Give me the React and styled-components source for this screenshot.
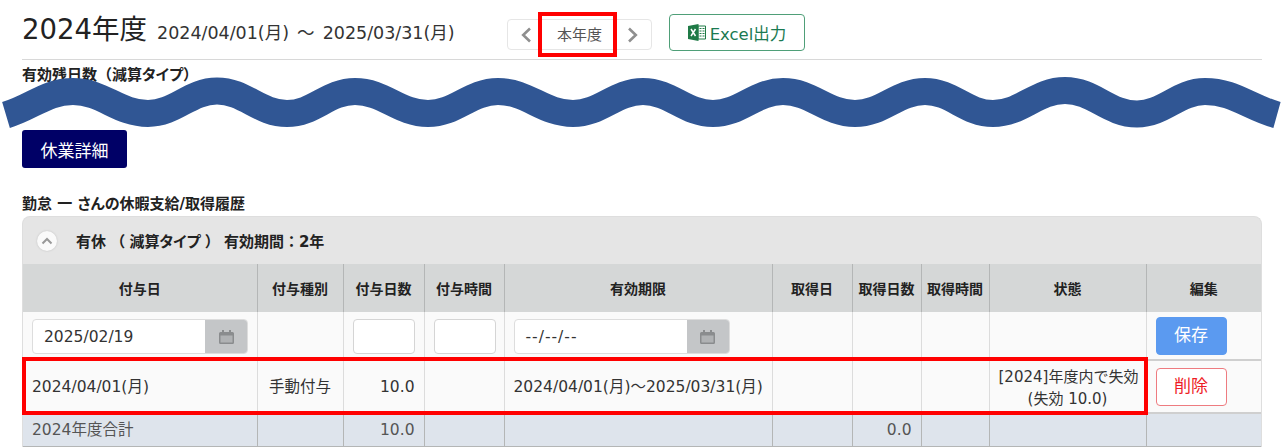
import React from 'react';
import styled, { createGlobalStyle } from 'styled-components';

const GlobalStyle = createGlobalStyle`
    html, body {
        margin: 0;
        padding: 0;
        background: #fff;
        font-family: "DejaVu Sans", "Noto Sans CJK JP", sans-serif;
        color: #333;
        overflow: hidden;
    }
`;

const Page = styled.div`
    position: relative;
    width: 1283px;
    height: 447px;
    overflow: hidden;
    box-sizing: border-box;
    padding: 0 21px 0 22px;
`;

const TitleBar = styled.div`
    display: flex;
    align-items: flex-start;
    height: 59px;
    border-bottom: 1px solid #d8d8d8;
`;

const TitleGroup = styled.div`
    display: flex;
    align-items: flex-start;
    gap: 10px;
    width: 485px;
`;

const Title = styled.h1`
    margin: 9px 0 0;
    font-size: 27.5px;
    line-height: 40px;
    font-weight: 400;
    color: #222;
    white-space: nowrap;
`;

const Period = styled.span`
    margin-top: 19px;
    font-size: 17.5px;
    line-height: 28px;
    word-spacing: 2.5px;
    color: #333;
    white-space: nowrap;
`;

const YearNav = styled.div`
    display: flex;
    align-items: center;
    justify-content: space-between;
    box-sizing: border-box;
    width: 145px;
    height: 31px;
    margin-top: 19px;
    border: 1px solid #e6e6e6;
    border-radius: 4px;
    padding: 0 12px;
    font-size: 15px;
    color: #555;
`;

const NavLabel = styled.span`
    margin-top: -3px;
`;

const ExcelButton = styled.div`
    display: flex;
    align-items: center;
    justify-content: center;
    gap: 4px;
    box-sizing: border-box;
    width: 136px;
    height: 37px;
    margin: 14px 0 0 17px;
    border: 1px solid #4f9f78;
    border-radius: 4px;
    font-size: 16.5px;
    color: #1b7a52;
`;

const SubHeading = styled.div`
    margin-top: 5px;
    height: 21px;
    font-size: 15px;
    line-height: 20px;
    font-weight: 700;
    color: #222;
`;

// katakana sits tighter than the kanji around it
const Kana = styled.span`
    font-feature-settings: "palt";
`;

const LeaveButton = styled.div`
    display: flex;
    align-items: center;
    justify-content: center;
    width: 105px;
    height: 38px;
    margin-top: 44px;
    border-radius: 3px;
    background: #000066;
    color: #fff;
    font-size: 17px;
`;

const HistoryHeading = styled.div`
    margin-top: 26px;
    height: 22px;
    font-size: 15px;
    line-height: 20px;
    font-weight: 700;
    color: #222;
    font-feature-settings: "palt";
`;

const Panel = styled.div`
    box-sizing: border-box;
    width: 1240px;
    border: 1px solid #dedede;
    border-bottom: 0;
    border-radius: 8px 8px 0 0;
    background: #e5e5e5;
`;

const PanelHead = styled.div`
    display: flex;
    align-items: center;
    height: 47px;
    padding-left: 14px;
    gap: 19px;
    font-size: 15px;
    font-weight: 700;
    word-spacing: -1px;
    color: #222;
`;

const Toggle = styled.div`
    display: flex;
    align-items: center;
    justify-content: center;
    width: 20px;
    height: 20px;
    border-radius: 50%;
    background: #fafafa;
    box-shadow: 0 0 2px #bbb;
`;

const Table = styled.table`
    width: 1238px;
    table-layout: fixed;
    border-collapse: collapse;
    background: #fafafa;
    font-size: 15.5px;
`;

const Th = styled.th`
    height: 48px;
    padding: 0;
    background: #d5d7d7;
    border-right: 1px solid #b4b6b6;
    font-size: 14px;
    font-weight: 700;
    color: #222;
    white-space: nowrap;
    &:last-child { border-right: 0; }
`;

const Td = styled.td`
    padding: 2px 9px 0;
    border-right: 1px solid ${p => (p.$total ? '#b4b6b6' : '#dcdcdc')};
    border-bottom: ${p => (p.$total ? '1px solid #b4b6b6' : '0')};
    background: ${p => (p.$total ? '#dee4ec' : 'transparent')};
    color: ${p => (p.$total ? '#555' : '#333')};
    text-align: ${p => p.$align || 'left'};
    white-space: nowrap;
    line-height: 21px;
    &:last-child { border-right: 0; }
`;

const Status = styled.div`
    font-size: 15px;
    line-height: 22px;
`;

const Row = styled.tr`
    height: ${p => p.$height}px;
    border-top: ${p => (p.$divided ? '2px solid #cfcfcf' : '0')};
`;

const DateField = styled.div`
    display: flex;
    box-sizing: border-box;
    width: 216px;
    height: 35px;
    border: 1px solid #dddddd;
    border-radius: 4px;
    background: #fff;
    overflow: hidden;
`;

const DateText = styled.div`
    flex: 1;
    padding-left: 11px;
    line-height: 35px;
    letter-spacing: ${p => (p.$empty ? '1px' : '0')};
`;

const DateAddon = styled.div`
    display: flex;
    align-items: center;
    justify-content: center;
    width: 42px;
    background: #c4c6c8;
`;

const NumberField = styled.div`
    box-sizing: border-box;
    width: 62px;
    height: 35px;
    border: 1px solid #d5d5d5;
    border-radius: 4px;
    background: #fff;
`;

const ActionButton = styled.div`
    display: flex;
    align-items: center;
    justify-content: center;
    box-sizing: border-box;
    width: 71px;
    height: 38px;
    margin-top: -2px;
    border-radius: 4px;
    font-size: 17px;
    border: 1px solid ${p => (p.$danger ? '#ee7b80' : '#5b9af0')};
    background: ${p => (p.$danger ? '#fff' : '#5b9af0')};
    color: ${p => (p.$danger ? '#ee1c25' : '#fff')};
`;

// red annotation frames drawn over the screenshot
const Highlight = styled.div`
    position: absolute;
    box-sizing: border-box;
    border: 4px solid #ff0000;
    left: ${p => p.$x}px;
    top: ${p => p.$y}px;
    width: ${p => p.$w}px;
    height: ${p => p.$h}px;
`;

const WaveOverlay = styled.svg`
    position: absolute;
    left: 0;
    top: 0;
`;

const Chevron = ({ dir }) => (
    <svg width="12" height="16" viewBox="0 0 12 16" fill="none" stroke="#8f8f8f" strokeWidth="2.6">
        <path d={dir === 'left' ? 'M10 1.5 3.2 8l6.800 6.500' : 'M2 1.5 8.800 8 2 14.500'} />
    </svg>
);

const ExcelIcon = () => (
    <svg width="18" height="17" viewBox="0 0 18 17">
        <path d="M10 2h7.500v13H10z" fill="#fff" stroke="#1f7a46" strokeWidth="1" />
        <path d="M11.500 4.500h2M14.500 4.500h2M11.500 7h2M14.500 7h2M11.500 9.500h2M14.500 9.500h2M11.500 12h2M14.500 12h2" stroke="#1f7a46" strokeWidth="1.2" />
        <path d="M0 2 10.500 0v17L0 15z" fill="#1f7a46" />
        <path d="M3 5l4.500 7M7.500 5 3 12" stroke="#fff" strokeWidth="1.5" />
    </svg>
);

const CalendarIcon = () => (
    <svg width="15" height="14" viewBox="0 0 15 14">
        <path d="M3 0h2v2h5V0h2v2h1.500A1.500 1.500 0 0 1 15 3.500v9a1.500 1.500 0 0 1-1.500 1.500h-12A1.500 1.500 0 0 1 0 12.500v-9A1.500 1.500 0 0 1 1.500 2H3z" fill="#8a8c8e" />
        <path d="M1.500 5.500h12v7h-12z" fill="#b0b2b4" />
    </svg>
);

const columns = [
    { label: '付与日', width: 234 },
    { label: '付与種別', width: 86 },
    { label: '付与日数', width: 81 },
    { label: '付与時間', width: 80 },
    { label: '有効期限', width: 268 },
    { label: '取得日', width: 80 },
    { label: '取得日数', width: 69 },
    { label: '取得時間', width: 68 },
    { label: '状態', width: 157 },
    { label: '編集', width: 115 },
];

// crests and troughs of the cut mark, left to right
const wavePoints = [
    [6, 115], [73, 91.5], [148, 113.5], [217, 91], [287, 113.5], [355, 91.5], [428, 113.5], [498, 91.5], [573, 113.5],
    [643, 91.5], [713, 113.5], [783, 91.5], [855, 113.5], [925, 91.5], [993, 113.5], [1065, 90.5], [1137, 114], [1205, 91.5], [1277, 115],
];

const buildWave = (points) => {
    let d = `M${points[0][0]} ${points[0][1]}`;
    for (let i = 1; i < points.length; i++) {
        const [x0, y0] = points[i - 1];
        const [x1, y1] = points[i];
        const dx = (x1 - x0) * 0.4;
        const y0c = i === 1 ? y0 - 8 : y0;
        const y1c = i === points.length - 1 ? y1 - 8 : y1;
        d += ` C${x0 + dx} ${y0c} ${x1 - dx} ${y1c} ${x1} ${y1}`;
    }
    return d;
};

const App = () => {
    return (
        <Page>
            <GlobalStyle />
            <TitleBar>
                <TitleGroup>
                    <Title>2024年度</Title>
                    <Period>2024/04/01(月) 〜 2025/03/31(月)</Period>
                </TitleGroup>
                <YearNav>
                    <Chevron dir="left" />
                    <NavLabel>本年度</NavLabel>
                    <Chevron dir="right" />
                </YearNav>
                <ExcelButton>
                    <ExcelIcon />
                    Excel出力
                </ExcelButton>
            </TitleBar>
            <SubHeading>有効残日数（減算<Kana>タイプ</Kana>）</SubHeading>
            <LeaveButton>休業詳細</LeaveButton>
            <HistoryHeading>勤怠 一 さんの休暇支給/取得履歴</HistoryHeading>
            <Panel>
                <PanelHead>
                    <Toggle>
                        <svg width="12" height="8" viewBox="0 0 12 8" fill="none" stroke="#999" strokeWidth="2">
                            <path d="M1.500 6.500 6 2l4.500 4.500" />
                        </svg>
                    </Toggle>
                    <span>有休 （ 減算<Kana>タイプ</Kana> ） 有効期間：2年</span>
                </PanelHead>
                <Table>
                    <colgroup>
                        {columns.map(c => <col key={c.label} style={{ width: c.width }} />)}
                    </colgroup>
                    <thead>
                        <tr>
                            {columns.map(c => <Th key={c.label}>{c.label}</Th>)}
                        </tr>
                    </thead>
                    <tbody>
                        <Row $height={48}>
                            <Td>
                                <DateField>
                                    <DateText>2025/02/19</DateText>
                                    <DateAddon><CalendarIcon /></DateAddon>
                                </DateField>
                            </Td>
                            <Td />
                            <Td><NumberField /></Td>
                            <Td><NumberField /></Td>
                            <Td>
                                <DateField>
                                    <DateText $empty>--/--/--</DateText>
                                    <DateAddon><CalendarIcon /></DateAddon>
                                </DateField>
                            </Td>
                            <Td />
                            <Td />
                            <Td />
                            <Td />
                            <Td><ActionButton>保存</ActionButton></Td>
                        </Row>
                        <Row $height={53} $divided>
                            <Td>2024/04/01(月)</Td>
                            <Td $align="center">手動付与</Td>
                            <Td $align="right">10.0</Td>
                            <Td />
                            <Td>2024/04/01(月)〜2025/03/31(月)</Td>
                            <Td />
                            <Td />
                            <Td />
                            <Td $align="center"><Status>[2024]年度内で失効<br />(失効 10.0)</Status></Td>
                            <Td><ActionButton $danger>削除</ActionButton></Td>
                        </Row>
                        <Row $height={33} $divided>
                            <Td $total>2024年度合計</Td>
                            <Td $total />
                            <Td $total $align="right">10.0</Td>
                            <Td $total />
                            <Td $total />
                            <Td $total />
                            <Td $total $align="right">0.0</Td>
                            <Td $total />
                            <Td $total />
                            <Td $total />
                        </Row>
                    </tbody>
                </Table>
            </Panel>
            <Highlight $x={538} $y={12} $w={79} $h={45} />
            <Highlight $x={22} $y={357} $w={1126} $h={58} />
            <WaveOverlay width="1283" height="447" viewBox="0 0 1283 447" fill="none">
                <path d={buildWave(wavePoints)} stroke="#305694" strokeWidth="27" />
            </WaveOverlay>
        </Page>
    );
};

export default App;
